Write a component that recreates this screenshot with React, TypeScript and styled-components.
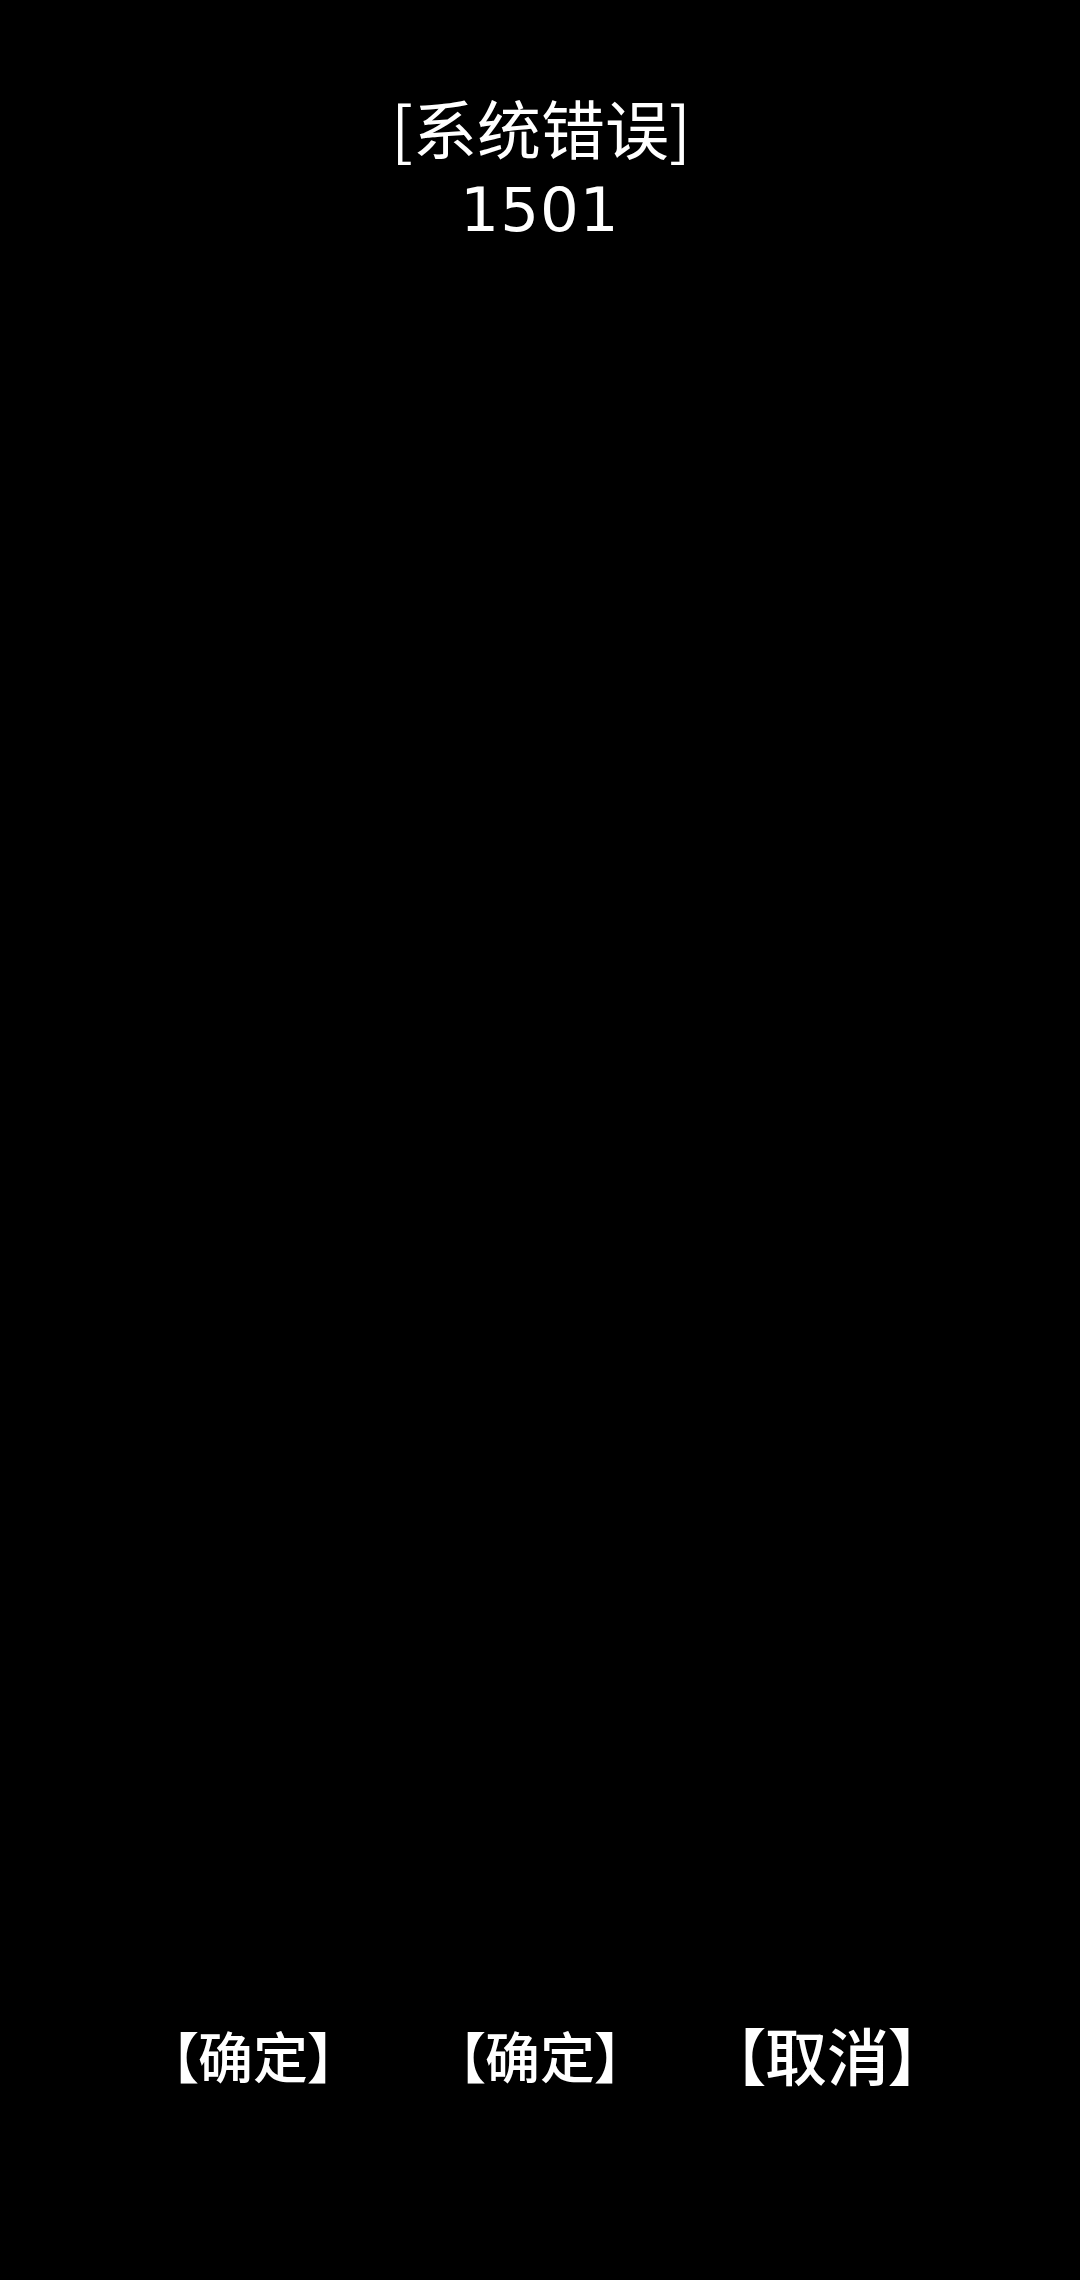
import React from "react";
import styled, { createGlobalStyle } from "styled-components";

const Global = createGlobalStyle`
  html, body { margin: 0; padding: 0; background: #000; }
  #root { min-height: 2280px; }
`;

const Screen = styled.div`
  width: 1080px;
  height: 2280px;
  background: #000;
  display: flex;
  flex-direction: column;
  align-items: center;
  color: #fff;
`;

const Header = styled.div`
  margin-top: 84px;
  display: flex;
  flex-direction: column;
  align-items: center;
`;

const Title = styled.div`
  font-family: "Noto Sans CJK SC", "DejaVu Sans", sans-serif;
  font-size: 64px;
  line-height: 84px;
  font-weight: 400;
  margin-left: 2px;
`;

const Code = styled.div`
  font-family: "DejaVu Sans", "Noto Sans CJK SC", sans-serif;
  font-size: 61px;
  line-height: 84px;
  letter-spacing: 1px;
`;

const Spacer = styled.div`
  flex: 1;
`;

const ButtonRow = styled.div`
  display: flex;
  justify-content: center;
  margin-bottom: 194px;
`;

const Button = styled.div<{ $big?: boolean }>`
  width: 287px;
  display: flex;
  justify-content: center;
  align-items: center;
  height: 64px;
  font-family: "Noto Sans CJK SC", sans-serif;
  font-weight: 500;
  font-size: ${(p) => (p.$big ? 62 : 55)}px;
  line-height: 64px;
  font-feature-settings: "palt";
  white-space: nowrap;
`;

export default function App() {
  return (
    <Screen>
      <Global />
      <Header>
        <Title>[系统错误]</Title>
        <Code>1501</Code>
      </Header>
      <Spacer />
      <ButtonRow>
        <Button>【确定】</Button>
        <Button>【确定】</Button>
        <Button $big>【取消】</Button>
      </ButtonRow>
    </Screen>
  );
}
